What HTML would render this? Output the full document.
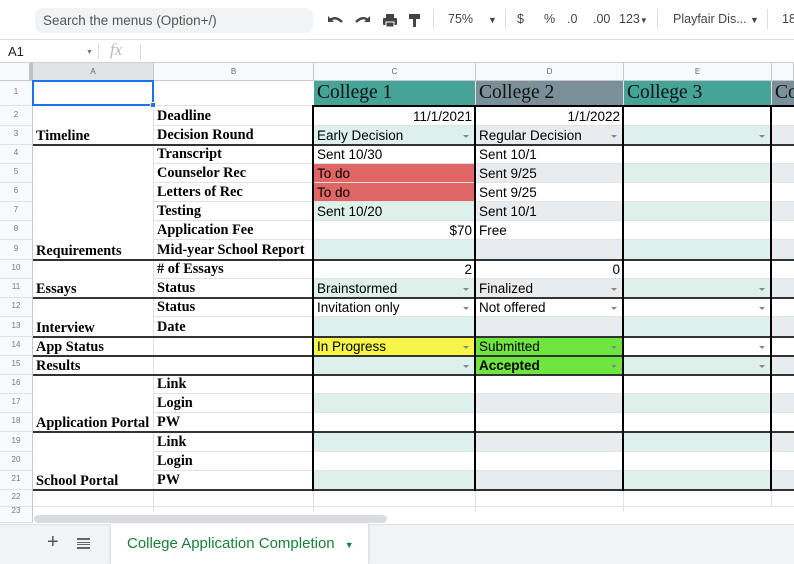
<!DOCTYPE html>
<html><head><meta charset="utf-8"><style>
*{box-sizing:border-box;margin:0;padding:0}
body{width:794px;height:564px;overflow:hidden;background:#fff;font-family:"Liberation Sans",sans-serif;position:relative}
.abs{position:absolute}
.r{position:absolute;left:0;width:794px}
.r>div{position:absolute;top:0;height:100%;white-space:nowrap;overflow:hidden;font-size:13.5px;line-height:1;display:flex;align-items:flex-end;padding:0 3px 2px}
.n{left:0;width:33px;background:#f8f9fa;color:#777;font-size:8px!important;justify-content:center;align-items:center!important;border-right:1px solid #c8c8c8;border-bottom:1px solid #e2e2e2}
.a{left:33px;width:121px;font-family:"Liberation Serif",serif;font-weight:bold;font-size:14.3px!important;border-right:1px solid #e2e2e2}
.b{left:154px;width:160px;font-family:"Liberation Serif",serif;font-weight:bold;font-size:14.3px!important;border-bottom:1px solid #e2e2e2}
.c{left:314px;width:162px;border-bottom:1px solid #e2e2e2;border-right:1px solid #e2e2e2}
.d{left:476px;width:148px;border-bottom:1px solid #e2e2e2;border-right:1px solid #e2e2e2}
.e{left:624px;width:148px;border-bottom:1px solid #e2e2e2;border-right:1px solid #e2e2e2}
.f{left:772px;width:22px;border-bottom:1px solid #e2e2e2}
.bd .c,.bd .e{background:#ddf0ec}.bd .d,.bd .f{background:#e9ecef}
.rt{justify-content:flex-end}
.dd::after{content:"";position:absolute;right:6px;bottom:6px;border-left:3px solid transparent;border-right:3px solid transparent;border-top:3px solid #888}
.hl{position:absolute;left:33px;width:761px;height:2px;background:#333}
.vl{position:absolute;top:105px;height:386px;width:2px;background:#000}
.ch{position:absolute;top:63px;height:18px;background:#f8f9fa;border-right:1px solid #c8c8c8;border-bottom:1px solid #c8c8c8;font-size:8px;color:#666;display:flex;align-items:center;justify-content:center}
.tb{position:absolute;top:12px;font-size:12.5px;color:#444}
.hd{font-family:"Liberation Serif",serif;font-size:19.5px!important;color:#111;padding-bottom:3px!important}
</style></head><body>
<div class="abs" style="left:0;top:0;width:794px;height:40px;background:#fff;border-bottom:1px solid #e0e0e0"></div>
<div class="abs" style="left:35px;top:8px;width:278px;height:25px;background:#f1f3f4;border-radius:8px;font-size:13.5px;color:#555;padding:5px 0 0 8px">Search the menus (Option+/)</div>
<svg class="abs" style="left:326px;top:12px" width="100" height="16" viewBox="0 0 100 16"><path d="M3 9 Q9 3 16 10" stroke="#444" stroke-width="2.4" fill="none"/><path d="M2 4 V10 H8Z" fill="#444"/><path d="M43 9 Q37 3 30 10" stroke="#444" stroke-width="2.4" fill="none"/><path d="M44 4 V10 H38Z" fill="#444"/><rect x="57" y="6" width="14" height="7" rx="1" fill="#444"/><rect x="60" y="2" width="8" height="4" fill="#444"/><rect x="60" y="10" width="8" height="5" fill="#444" stroke="#fff" stroke-width="1"/><rect x="83" y="2" width="11" height="5" fill="#444"/><rect x="87" y="7" width="3" height="8" fill="#444"/></svg>
<div class="abs" style="left:433px;top:9px;width:1px;height:20px;background:#ddd"></div>
<div class="tb" style="left:448px">75%</div><div class="tb" style="left:488px;font-size:9px;top:15px">▼</div>
<div class="abs" style="left:505px;top:9px;width:1px;height:20px;background:#ddd"></div>
<div class="tb" style="left:517px">$</div><div class="tb" style="left:544px">%</div><div class="tb" style="left:567px">.0</div><div class="tb" style="left:593px">.00</div><div class="tb" style="left:619px">123<span style="font-size:8px">▼</span></div>
<div class="abs" style="left:657px;top:9px;width:1px;height:20px;background:#ddd"></div>
<div class="tb" style="left:673px">Playfair Dis...</div><div class="tb" style="left:750px;font-size:9px;top:15px">▼</div>
<div class="abs" style="left:767px;top:9px;width:1px;height:20px;background:#ddd"></div>
<div class="tb" style="left:782px">18</div>
<div class="abs" style="left:0;top:40px;width:794px;height:23px;border-bottom:1px solid #d0d0d0"></div>
<div class="abs" style="left:8px;top:44px;font-size:13px;color:#222">A1</div>
<div class="abs" style="left:86px;top:49px;font-size:7px;color:#777">▼</div>
<div class="abs" style="left:98px;top:44px;width:1px;height:15px;background:#ddd"></div>
<div class="abs" style="left:110px;top:40px;font-family:'Liberation Serif',serif;font-style:italic;font-size:17px;color:#bbb">fx</div>
<div class="abs" style="left:140px;top:44px;width:1px;height:15px;background:#ddd"></div>
<div class="ch" style="left:0;width:33px;border-right:4px solid #c0c0c0"></div>
<div class="ch" style="left:33px;width:121px;background:#e2e3e5">A</div>
<div class="ch" style="left:154px;width:160px">B</div>
<div class="ch" style="left:314px;width:162px">C</div>
<div class="ch" style="left:476px;width:148px">D</div>
<div class="ch" style="left:624px;width:148px">E</div>
<div class="ch" style="left:772px;width:22px"></div>
<div class="r" style="top:81px;height:25px"><div class="n">1</div><div class="a"></div><div class="b"></div><div class="c hd" style="background:#45a397">College 1</div><div class="d hd" style="background:#7b8f99">College 2</div><div class="e hd" style="background:#45a397">College 3</div><div class="f hd" style="background:#7b8f99">Co</div></div>
<div class="r" style="top:106px;height:20px"><div class="n">2</div><div class="a"></div><div class="b">Deadline</div><div class="c rt">11/1/2021</div><div class="d rt">1/1/2022</div><div class="e"></div><div class="f"></div></div>
<div class="r bd" style="top:126px;height:19px"><div class="n">3</div><div class="a">Timeline</div><div class="b">Decision Round</div><div class="c dd">Early Decision</div><div class="d dd">Regular Decision</div><div class="e dd"></div><div class="f"></div></div>
<div class="r" style="top:145px;height:19px"><div class="n">4</div><div class="a"></div><div class="b">Transcript</div><div class="c">Sent 10/30</div><div class="d">Sent 10/1</div><div class="e"></div><div class="f"></div></div>
<div class="r bd" style="top:164px;height:19px"><div class="n">5</div><div class="a"></div><div class="b">Counselor Rec</div><div class="c" style="background:#e06666">To do</div><div class="d">Sent 9/25</div><div class="e"></div><div class="f"></div></div>
<div class="r" style="top:183px;height:19px"><div class="n">6</div><div class="a"></div><div class="b">Letters of Rec</div><div class="c" style="background:#e06666">To do</div><div class="d">Sent 9/25</div><div class="e"></div><div class="f"></div></div>
<div class="r bd" style="top:202px;height:19px"><div class="n">7</div><div class="a"></div><div class="b">Testing</div><div class="c">Sent 10/20</div><div class="d">Sent 10/1</div><div class="e"></div><div class="f"></div></div>
<div class="r" style="top:221px;height:19px"><div class="n">8</div><div class="a"></div><div class="b">Application Fee</div><div class="c rt">$70</div><div class="d">Free</div><div class="e"></div><div class="f"></div></div>
<div class="r bd" style="top:240px;height:20px"><div class="n">9</div><div class="a">Requirements</div><div class="b">Mid-year School Report</div><div class="c"></div><div class="d"></div><div class="e"></div><div class="f"></div></div>
<div class="r" style="top:260px;height:19px"><div class="n">10</div><div class="a"></div><div class="b"># of Essays</div><div class="c rt">2</div><div class="d rt">0</div><div class="e"></div><div class="f"></div></div>
<div class="r bd" style="top:279px;height:19px"><div class="n">11</div><div class="a">Essays</div><div class="b">Status</div><div class="c dd">Brainstormed</div><div class="d dd">Finalized</div><div class="e dd"></div><div class="f"></div></div>
<div class="r" style="top:298px;height:19px"><div class="n">12</div><div class="a"></div><div class="b">Status</div><div class="c dd">Invitation only</div><div class="d dd">Not offered</div><div class="e dd"></div><div class="f"></div></div>
<div class="r bd" style="top:317px;height:20px"><div class="n">13</div><div class="a">Interview</div><div class="b">Date</div><div class="c"></div><div class="d"></div><div class="e"></div><div class="f"></div></div>
<div class="r" style="top:337px;height:19px"><div class="n">14</div><div class="a">App Status</div><div class="b"></div><div class="c dd" style="background:#f7f54a">In Progress</div><div class="d dd" style="background:#6fe63f">Submitted</div><div class="e dd"></div><div class="f"></div></div>
<div class="r bd" style="top:356px;height:19px"><div class="n">15</div><div class="a">Results</div><div class="b"></div><div class="c dd"></div><div class="d dd" style="background:#6fe63f;font-weight:bold">Accepted</div><div class="e dd"></div><div class="f"></div></div>
<div class="r" style="top:375px;height:19px"><div class="n">16</div><div class="a"></div><div class="b">Link</div><div class="c"></div><div class="d"></div><div class="e"></div><div class="f"></div></div>
<div class="r bd" style="top:394px;height:19px"><div class="n">17</div><div class="a"></div><div class="b">Login</div><div class="c"></div><div class="d"></div><div class="e"></div><div class="f"></div></div>
<div class="r" style="top:413px;height:19px"><div class="n">18</div><div class="a">Application Portal</div><div class="b">PW</div><div class="c"></div><div class="d"></div><div class="e"></div><div class="f"></div></div>
<div class="r bd" style="top:432px;height:20px"><div class="n">19</div><div class="a"></div><div class="b">Link</div><div class="c"></div><div class="d"></div><div class="e"></div><div class="f"></div></div>
<div class="r" style="top:452px;height:19px"><div class="n">20</div><div class="a"></div><div class="b">Login</div><div class="c"></div><div class="d"></div><div class="e"></div><div class="f"></div></div>
<div class="r bd" style="top:471px;height:19px"><div class="n">21</div><div class="a">School Portal</div><div class="b">PW</div><div class="c"></div><div class="d"></div><div class="e"></div><div class="f"></div></div>
<div class="r" style="top:490px;height:17px"><div class="n">22</div><div class="a" style="border-bottom:1px solid #e2e2e2"></div><div class="b" style="border-right:1px solid #e2e2e2"></div><div class="c"></div><div class="d"></div><div class="e"></div><div class="f"></div></div>
<div class="r" style="top:507px;height:16px"><div class="n" style="align-items:flex-start!important">23</div><div class="a"></div><div class="b" style="border-right:1px solid #e2e2e2;border-bottom:0"></div><div class="c" style="border-bottom:0"></div><div class="d" style="border-bottom:0"></div></div>
<div class="hl" style="top:144px"></div><div class="hl" style="top:259px"></div><div class="hl" style="top:297px"></div><div class="hl" style="top:336px"></div><div class="hl" style="top:355px"></div><div class="hl" style="top:374px"></div><div class="hl" style="top:431px"></div><div class="hl" style="top:489px"></div>
<div class="hl" style="top:105px;left:313px;width:481px;background:#000"></div>
<div class="vl" style="left:312px"></div><div class="vl" style="left:474px"></div><div class="vl" style="left:622px"></div><div class="vl" style="left:770px"></div>
<div class="abs" style="left:32px;top:80px;width:122px;height:26px;border:2px solid #1a73e8"></div>
<div class="abs" style="left:150px;top:102px;width:6px;height:6px;background:#1a73e8;border:1px solid #fff"></div>
<div class="abs" style="left:33px;top:512px;width:761px;height:12px;background:#fff"></div>
<div class="abs" style="left:34px;top:515px;width:353px;height:8px;background:#dadce0;border-radius:4px"></div>
<div class="abs" style="left:0;top:524px;width:794px;height:40px;background:#f1f3f4;border-top:1px solid #e0e0e0"></div>
<div class="abs" style="left:47px;top:531px;font-size:20px;color:#555">+</div>
<div class="abs" style="left:77px;top:538px;width:13px;height:11px;border-top:2px solid #666;border-bottom:2px solid #666"><div style="margin-top:2px;height:3px;border-top:1.5px solid #666;border-bottom:1.5px solid #666"></div></div>
<div class="abs" style="left:111px;top:524px;width:257px;height:40px;background:#fff;box-shadow:0 1px 3px rgba(0,0,0,.2);color:#188038;font-size:15px;padding:11px 0 0 16px">College Application Completion <span style="font-size:9px;margin-left:6px">▼</span></div>
</body></html>
